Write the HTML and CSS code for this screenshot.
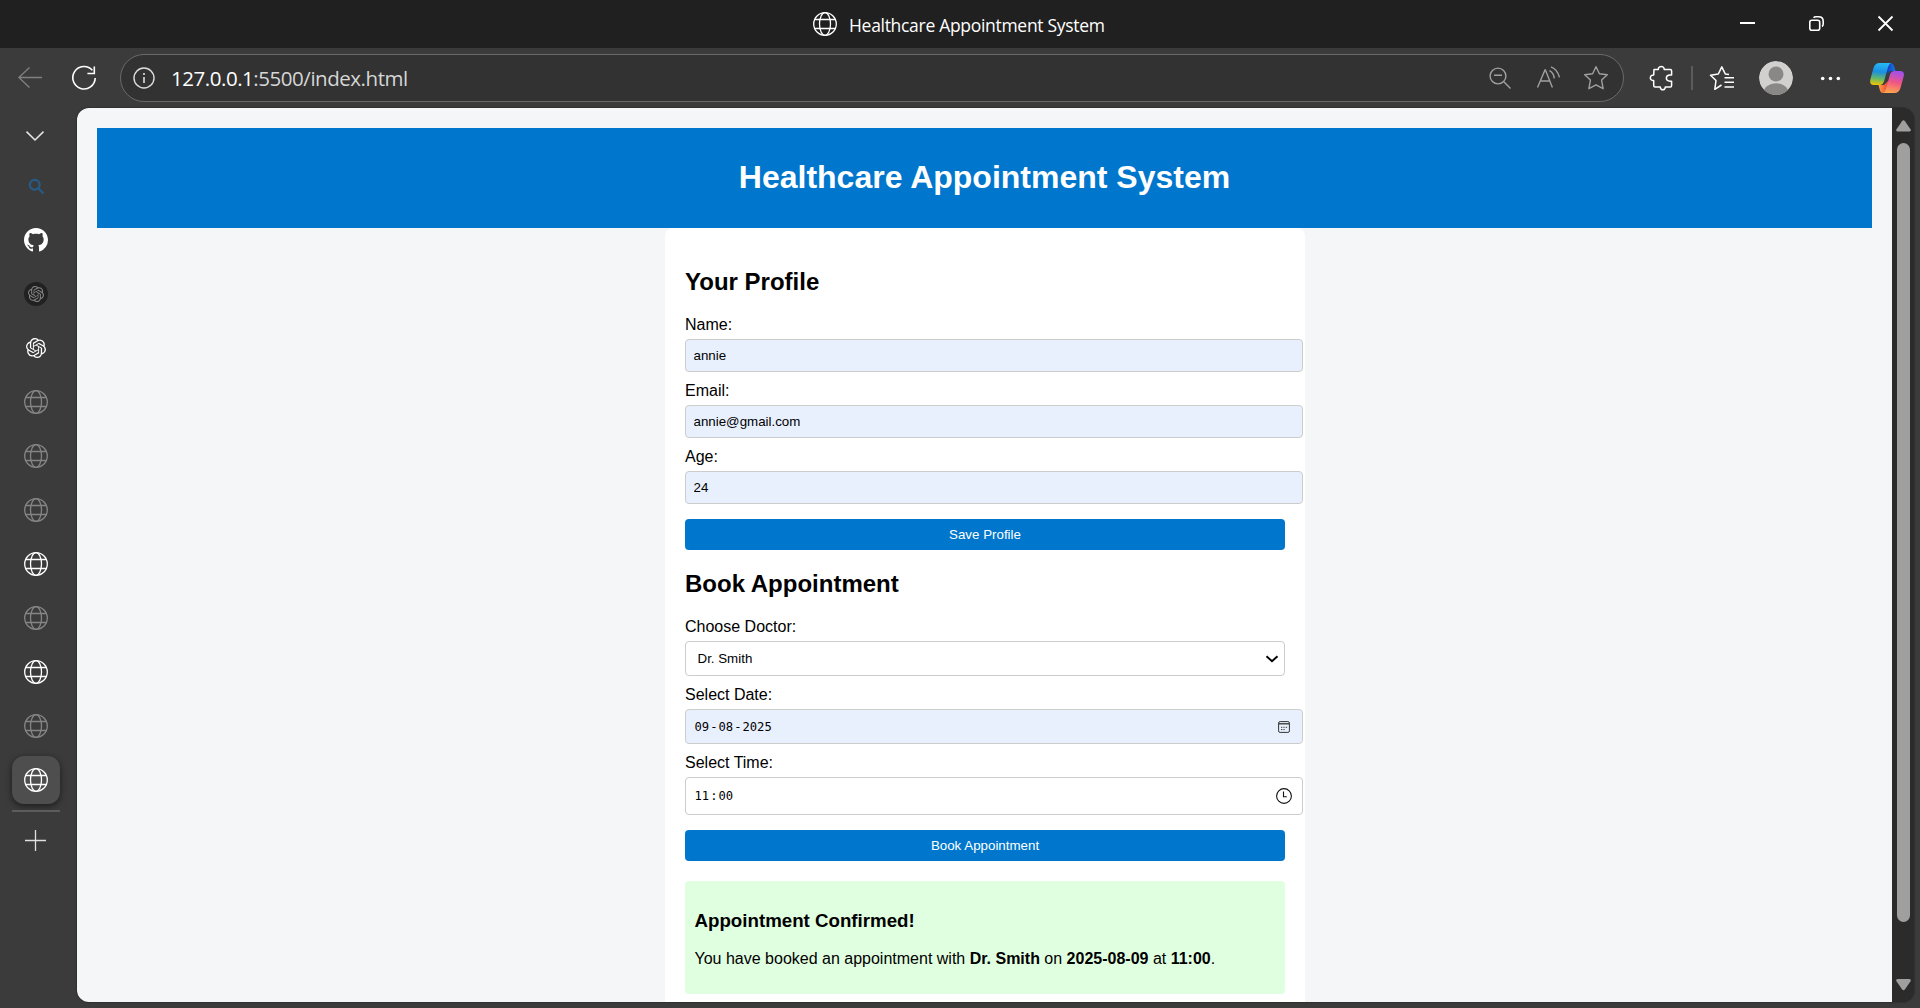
FILE: index.html
```html
<!DOCTYPE html>
<html lang="en">
<head>
<meta charset="utf-8">
<title>Healthcare Appointment System</title>
<link rel="stylesheet" href="styles.css">
</head>
<body>
<svg class="defs" width="0" height="0">
  <symbol id="globe" viewBox="0 0 24 24"><g fill="none" stroke="currentColor" stroke-width="1.3"><circle cx="12" cy="12" r="11.3"/><ellipse cx="12" cy="12" rx="5.5" ry="11.3"/><path d="M1.6 7.5h20.8M1.6 16.500h20.800"/></g></symbol>
  <symbol id="knot" viewBox="0 0 24 24"><path fill="currentColor" d="M22.2819 9.8211a5.9847 5.9847 0 0 0-.5157-4.9108 6.0462 6.0462 0 0 0-6.5098-2.9A6.0651 6.0651 0 0 0 4.9807 4.1818a5.9847 5.9847 0 0 0-3.9977 2.9 6.0462 6.0462 0 0 0 .7427 7.0966 5.98 5.98 0 0 0 .511 4.9107 6.051 6.051 0 0 0 6.5146 2.9001A5.9847 5.9847 0 0 0 13.2599 24a6.0557 6.0557 0 0 0 5.7718-4.2058 5.9894 5.9894 0 0 0 3.9977-2.9001 6.0557 6.0557 0 0 0-.7475-7.073zm-9.022 12.6081a4.4755 4.4755 0 0 1-2.8764-1.0408l.1419-.0804 4.7783-2.7582a.7948.7948 0 0 0 .3927-.6813v-6.7369l2.02 1.1686a.071.071 0 0 1 .038.052v5.5826a4.504 4.504 0 0 1-4.4945 4.4944zm-9.6607-4.1254a4.4708 4.4708 0 0 1-.5346-3.0137l.142.0852 4.783 2.7582a.7712.7712 0 0 0 .7806 0l5.8428-3.3685v2.3324a.0804.0804 0 0 1-.0332.0615L9.74 19.9502a4.4992 4.4992 0 0 1-6.1408-1.6464zM2.3408 7.8956a4.485 4.485 0 0 1 2.3655-1.9728V11.6a.7664.7664 0 0 0 .3879.6765l5.8144 3.3543-2.0201 1.1685a.0757.0757 0 0 1-.071 0l-4.8303-2.7865A4.504 4.504 0 0 1 2.3408 7.872zm16.5963 3.8558L13.1038 8.364 15.1192 7.2a.0757.0757 0 0 1 .071 0l4.8303 2.7913a4.4944 4.4944 0 0 1-.6765 8.1042v-5.6772a.79.79 0 0 0-.407-.667zm2.0107-3.0231l-.142-.0852-4.7735-2.7818a.7759.7759 0 0 0-.7854 0L9.409 9.2297V6.8974a.0662.0662 0 0 1 .0284-.0615l4.8303-2.7866a4.4992 4.4992 0 0 1 6.6802 4.66zM8.3065 12.863l-2.02-1.1638a.0804.0804 0 0 1-.038-.0567V6.0742a4.4992 4.4992 0 0 1 7.3757-3.4537l-.142.0805L8.704 5.459a.7948.7948 0 0 0-.3927.6813zm1.0976-2.3654l2.602-1.4998 2.6069 1.4998v2.9994l-2.5974 1.4997-2.6067-1.4997Z"/></symbol>
</svg>

<header class="titlebar">
  <div class="title"><svg width="24" height="24"><use href="#globe"/></svg><span class="title-text">Healthcare Appointment System</span></div>
  <div class="window-buttons">
    <span class="wbtn"><svg width="15" height="15"><path d="M0 7h15" stroke="#fff" stroke-width="2"/></svg></span>
    <span class="wbtn"><svg width="15" height="15" fill="none" stroke="#fff" stroke-width="1.6"><rect x=".8" y="4.300" width="9.900" height="9.900" rx="2"/><path d="M4.600 1.800Q5.300.8 7 .8h2.600Q14.200.8 14.200 5.400V8q0 1.700-1.200 2.500"/></svg></span>
    <span class="wbtn"><svg width="15" height="15"><path d="M.5.5l14 14M14.500.5l-14 14" stroke="#fff" stroke-width="1.800"/></svg></span>
  </div>
</header>

<nav class="toolbar">
  <span class="slot w60"><svg width="24" height="22" fill="none" stroke="#808080" stroke-width="1.3"><path d="M24 10.500H1M11.500.500L.9 10.500l10.600 10"/></svg></span>
  <span class="slot w48"><svg width="24" height="24" fill="none" stroke="#fff" stroke-width="1.6"><path d="M20.400 4.300A11.200 11.200 0 1 0 23.200 12M22.300.5v7H15.400"/></svg></span>
  <div class="address">
    <span class="slot w46"><svg width="22" height="22"><circle cx="11" cy="11" r="10" fill="none" stroke="#ddd" stroke-width="1.400"/><path d="M11 10v6" stroke="#ddd" stroke-width="1.600"/><circle cx="11" cy="7" r="1.100" fill="#ddd"/></svg></span>
    <span class="url"><span class="host">127.0.0.1</span>:5500/index.html</span>
    <span class="slot w48"><svg width="22" height="22" fill="none" stroke="#a0a0a0" stroke-width="1.400"><circle cx="9" cy="9" r="7.900"/><path d="M5 8.200h8M14.800 14.800l6.700 6.700"/></svg></span>
    <span class="slot w48"><svg width="24" height="24" fill="none" stroke="#a0a0a0" stroke-width="1.400"><path d="M1.500 21.500L9 4h.4l7 17.500M4.100 15h10M13.500 4.600q4.500 2.400 4.700 8M15 .9q6.500 2.500 8.500 10.500"/></svg></span>
    <span class="slot w48"><svg width="26" height="26" fill="none" stroke="#a0a0a0" stroke-width="1.400" stroke-linejoin="round"><path d="M13 1.700l3.400 7 7.900 1-5.700 5.400 1.500 8.600-7.100-3.900-7.100 3.900 1.500-8.600L1.700 9.700l7.900-1z"/></svg></span>
  </div>
  <span class="slot puzzle"><svg width="24" height="26" fill="none" stroke="#fff" stroke-width="1.500" stroke-linejoin="round"><path d="M5 4.500h4.300c-.3-4 6.200-4 5.900 0h6.100q1.300 0 1.300 1.300v4.100h-1.500c-5 .3-5 6.100 0 6.400h1.500v4.200q0 1.600-1.300 1.600h-5.100c.2 3.600-5 3.600-4.900 0H6.200q-1.500 0-1.500-1.500v-5c-4.500.2-4.500-5.800 0-5.600z"/></svg></span>
  <span class="slot w16"><i class="divider"></i></span>
  <span class="slot w44"><svg width="26" height="26" fill="none" stroke="#fff" stroke-width="1.500" stroke-linejoin="round"><path d="M12.500 20l-6.700 4.300 1.200-8.800-5.500-5.300 7.800-1.200L12.800 1.900l3.500 7.100 3.700.6M15.500 12.700H25M15.500 17.200H25M15.500 22H25"/></svg></span>
  <span class="slot w64"><svg width="34" height="34"><clipPath id="face"><circle cx="17" cy="17" r="17"/></clipPath><g clip-path="url(#face)"><circle cx="17" cy="17" r="17" fill="#d2d0ce"/><circle cx="17" cy="13" r="7.500" fill="#8a8886"/><ellipse cx="17" cy="32" rx="12.500" ry="9.800" fill="#8a8886"/></g></svg></span>
  <span class="slot w46"><svg width="20" height="6" fill="#fff"><circle cx="1.700" cy="3.500" r="1.800"/><circle cx="9.500" cy="3.500" r="1.800"/><circle cx="17.300" cy="3.500" r="1.800"/></svg></span>
  <span class="slot w66"><svg width="34" height="30">
    <defs>
      <linearGradient id="ca" x1=".4" y1="0" x2=".3" y2="1"><stop offset="0" stop-color="#25b8f5"/><stop offset=".4" stop-color="#1c8fe0"/><stop offset=".7" stop-color="#63b86a"/><stop offset="1" stop-color="#f5c400"/></linearGradient>
      <linearGradient id="cb" x1=".6" y1="0" x2=".4" y2="1"><stop offset="0" stop-color="#a050ee"/><stop offset=".5" stop-color="#ef5586"/><stop offset="1" stop-color="#ffa64d"/></linearGradient>
      <linearGradient id="cc"><stop offset="0" stop-color="#1038b8"/><stop offset="1" stop-color="#1b75e8"/></linearGradient>
      <linearGradient id="cd"><stop offset="0" stop-color="#ffa040"/><stop offset="1" stop-color="#e83a38"/></linearGradient>
    </defs>
    <path fill="url(#cc)" d="M16 0h4q3 0 4 3l1.500 5H22q-3 0-4 3l-2-3z"/>
    <path fill="url(#cd)" d="M8.500 22H14l4-4 1 12h-6q-2.500 0-3.300-3.500z"/>
    <path fill="url(#ca)" d="M9.500 0H21q-2 .6-2.800 3.500L14 18.500Q12.800 22 9.500 22H4Q-.7 22 .2 17L3.500 5Q5 0 9.500 0z"/>
    <path fill="url(#cb)" d="M24.500 8H30q4.700 0 3.800 5L30.500 25Q29 30 24.500 30H13q2-.6 2.800-3.500L20 11.500Q21.200 8 24.500 8z"/>
  </svg></span>
</nav>

<div class="workspace">
  <aside class="tabs">
    <span class="expand"><svg width="18" height="10" fill="none" stroke="#e6e6e6" stroke-width="1.500"><path d="M.5.600L9 9 17.500.600"/></svg></span>
    <span class="tab"><svg width="15" height="15" fill="none" stroke="#265a87" stroke-width="2.300"><circle cx="5.700" cy="5.700" r="4.900"/><path d="M9.200 9.200l5.300 5.300"/></svg></span>
    <span class="tab"><svg width="24" height="24" viewBox="0 0 16 16" fill="#fff"><path d="M8 0C3.580 0 0 3.580 0 8c0 3.540 2.290 6.530 5.470 7.590.4.070.55-.17.55-.38 0-.19-.01-.82-.01-1.490-2.010.37-2.530-.49-2.690-.94-.09-.23-.48-.94-.82-1.130-.28-.15-.68-.52-.01-.53.63-.01 1.080.58 1.230.82.72 1.210 1.870.87 2.330.66.07-.52.28-.87.51-1.070-1.780-.2-3.640-.89-3.640-3.950 0-.87.31-1.590.82-2.150-.08-.2-.36-1.020.08-2.120 0 0 .67-.21 2.200.82.64-.18 1.320-.27 2-.27s1.360.09 2 .27c1.530-1.040 2.200-.82 2.200-.82.44 1.100.16 1.920.08 2.120.51.56.82 1.270.82 2.150 0 3.070-1.870 3.750-3.650 3.950.29.25.54.73.54 1.480 0 1.070-.01 1.930-.01 2.200 0 .21.15.46.55.38A8.010 8.010 0 0 0 16 8c0-4.420-3.580-8-8-8z"/></svg></span>
    <span class="tab dim"><span class="disc"><svg width="16" height="16"><use href="#knot"/></svg></span></span>
    <span class="tab"><svg width="20" height="20"><use href="#knot"/></svg></span>
    <span class="tab dim"><svg width="24" height="24"><use href="#globe"/></svg></span>
    <span class="tab dim"><svg width="24" height="24"><use href="#globe"/></svg></span>
    <span class="tab dim"><svg width="24" height="24"><use href="#globe"/></svg></span>
    <span class="tab"><svg width="24" height="24"><use href="#globe"/></svg></span>
    <span class="tab dim"><svg width="24" height="24"><use href="#globe"/></svg></span>
    <span class="tab"><svg width="24" height="24"><use href="#globe"/></svg></span>
    <span class="tab dim"><svg width="24" height="24"><use href="#globe"/></svg></span>
    <span class="tab"><span class="active"><svg width="24" height="24"><use href="#globe"/></svg></span></span>
    <i class="rule"></i>
    <span class="new-tab"><svg width="21" height="21" stroke="#e0e0e0" stroke-width="1.300"><path d="M10.500 0v21M0 10.500h21"/></svg></span>
  </aside>

  <div class="viewport">
    <main class="page">
      <div class="banner"><h1>Healthcare Appointment System</h1></div>
      <section class="card">
        <h2>Your Profile</h2>
        <label for="name">Name:</label>
        <input class="field" id="name" value="annie">
        <label for="email">Email:</label>
        <input class="field" id="email" value="annie@gmail.com">
        <label for="age">Age:</label>
        <input class="field" id="age" value="24">
        <button class="action">Save Profile</button>
        <h2>Book Appointment</h2>
        <label>Choose Doctor:</label>
        <div class="picker doctor"><span>Dr. Smith</span><svg width="12" height="8" fill="none" stroke="#000" stroke-width="1.900"><path d="M.5 1.200L6 6.200l5.500-5"/></svg></div>
        <label>Select Date:</label>
        <div class="picker date"><span class="mono"><b>09</b>-<b>08</b>-<b>2025</b></span><svg width="12" height="12" fill="none" stroke="#333" stroke-width="1"><rect x=".6" y=".6" width="10.800" height="10.800" rx="1.500"/><path d="M.6 2.800h10.800" stroke-width="1.300"/><path d="M3 6.300h1.300M5.400 6.300h1.300M7.800 6.300h1.300M3 8.600h1.300M5.400 8.600h1.300"/></svg></div>
        <label>Select Time:</label>
        <div class="picker time"><span class="mono"><b>11</b>:<b>00</b></span><svg width="16" height="16" fill="none" stroke="#111" stroke-width="1.100"><circle cx="8" cy="8" r="7.400"/><path d="M7.500 3.500v5.200h3.300"/></svg></div>
        <button class="action">Book Appointment</button>
        <div class="confirmation">
          <h3>Appointment Confirmed!</h3>
          <p>You have booked an appointment with <strong>Dr. Smith</strong> on <strong>2025-08-09</strong> at <strong>11:00</strong>.</p>
        </div>
      </section>
    </main>
    <div class="scrollbar">
      <svg width="15" height="12" fill="#9f9f9f"><path d="M6 1.200q1.500-2 3 0l5.500 8q1 2-1.200 2.300H1.700Q-.5 11.200.5 9.200z"/></svg>
      <i class="thumb"></i>
      <svg width="15" height="12" fill="#9f9f9f"><path d="M6 10.300q1.500 2 3 0l5.500-8q1-2-1.200-2.300H1.700Q-.5.300.5 2.300z"/></svg>
    </div>
  </div>
</div>
</body>
</html>
```
FILE: styles.css
```css
* { box-sizing: border-box; }
body {
  margin: 0;
  width: 1920px;
  height: 1008px;
  overflow: hidden;
  background: #3b3b3b;
  color: #fff;
  font-family: "Open Sans", "Noto Sans", sans-serif;
  display: flex;
  flex-direction: column;
}
svg { display: block; flex: none; overflow: visible; }
.defs { position: absolute; }

.titlebar {
  height: 48px;
  flex: none;
  background: #202020;
  display: flex;
  justify-content: space-between;
  padding-left: 813px;
}
.title { display: flex; align-items: center; gap: 12px; }
.title-text { font-size: 17.5px; letter-spacing: -0.3px; line-height: 24px; padding-top: 1px; white-space: nowrap; }
.window-buttons { display: flex; height: 47px; }
.wbtn { width: 69px; display: flex; align-items: center; justify-content: center; }

.toolbar { height: 60px; flex: none; display: flex; align-items: center; }
.slot { flex: none; display: flex; align-items: center; justify-content: center; }
.w16 { width: 16px; }
.w44 { width: 44px; }
.w46 { width: 46px; }
.w48 { width: 48px; }
.w60 { width: 60px; }
.w64 { width: 64px; }
.w66 { width: 66px; }
.puzzle { width: 46px; margin-left: 14px; }
.address {
  flex: none;
  width: 1504px;
  height: 48px;
  margin-left: 12px;
  padding-right: 3px;
  border: 1px solid #6a6a6a;
  border-radius: 24px;
  background: #323232;
  display: flex;
  align-items: center;
}
.url { flex: 1; padding: 0 0 1px 4px; font-size: 20.5px; letter-spacing: -0.46px; line-height: 28px; color: #d6d6d6; }
.host { color: #fff; }
.divider { width: 2px; height: 24px; background: #5c5c5c; }

.workspace { display: flex; height: 900px; padding-bottom: 6px; }
.tabs { width: 77px; flex: none; display: flex; flex-direction: column; padding-right: 5px; }
.expand { height: 51px; padding: 23px 2px 0 0; display: flex; justify-content: center; }
.tab { height: 54px; flex: none; display: flex; align-items: center; justify-content: center; }
.dim { color: #858585; }
.disc { width: 24px; height: 24px; border-radius: 50%; background: #212121; display: flex; align-items: center; justify-content: center; }
.active {
  width: 48px;
  height: 48px;
  border-radius: 12px;
  background: #4e4e4e;
  box-shadow: 0 2px 6px rgba(0, 0, 0, 0.55);
  display: flex;
  align-items: center;
  justify-content: center;
}
.rule { height: 2px; margin: 3px 12px 0; background: #5c5c5c; }
.new-tab { padding: 18px 2px 0 0; display: flex; justify-content: center; }

.viewport {
  width: 1837px;
  height: 894px;
  display: flex;
  border-radius: 12px;
  overflow: hidden;
  background: #2b2b2b;
  box-shadow: 0 0 2px rgba(0, 0, 0, 0.6);
}
.page {
  width: 1815px;
  flex: none;
  padding: 20px 20px 0;
  background: #f4f6f8;
  color: #000;
  font-family: "Liberation Sans", Arial, sans-serif;
  font-size: 16px;
  line-height: 18px;
}
.banner { height: 100px; background: #0077cc; color: #fff; text-align: center; padding-top: 31px; }
h1 { margin: 0; font-size: 32px; line-height: 37px; }
.card { width: 640px; height: 820px; margin: 0 auto 0 568px; padding: 20px; border-radius: 8px; background: #fff; display: flow-root; }
h2 { margin: 20px 0; font-size: 24px; line-height: 27px; }
label { display: block; padding-top: 1px; margin-bottom: 5px; }
.field, .picker {
  display: block;
  width: 618px;
  height: 33px;
  margin: 0 0 9px;
  padding: 0 7.5px;
  border: 1px solid #ccc;
  border-radius: 4px;
  background: #e8f0fe;
  color: #000;
  font: 13.333px "Liberation Sans", Arial, sans-serif;
}
.picker { display: flex; align-items: center; justify-content: space-between; height: 35px; }
.doctor { width: 600px; background: #fff; padding: 0 6px 0 11.5px; }
.date { padding-right: 12px; }
.time { height: 38px; background: #fff; padding-right: 10px; }
.mono { font: 12.18px "DejaVu Sans Mono", monospace; }
.mono b { font-weight: normal; padding: 0 1px; }
.action {
  display: block;
  width: 600px;
  height: 31px;
  margin: 15px 0 20px;
  padding: 0;
  border: 0;
  border-radius: 4px;
  background: #0077cc;
  color: #fff;
  font: 13.333px "Liberation Sans", Arial, sans-serif;
}
.confirmation { height: 113px; padding: 29px 9.5px 0; border-radius: 4px; background: #e0ffe0; }
h3 { margin: 0 0 19px; font-size: 18.72px; line-height: 21px; }
p { margin: 0; white-space: nowrap; }

.scrollbar { width: 22px; display: flex; flex-direction: column; align-items: center; padding: 12px 0 0 1px; }
.thumb { width: 13px; height: 779px; margin: 11px 0 57px; border-radius: 7px; background: #9f9f9f; }
```
